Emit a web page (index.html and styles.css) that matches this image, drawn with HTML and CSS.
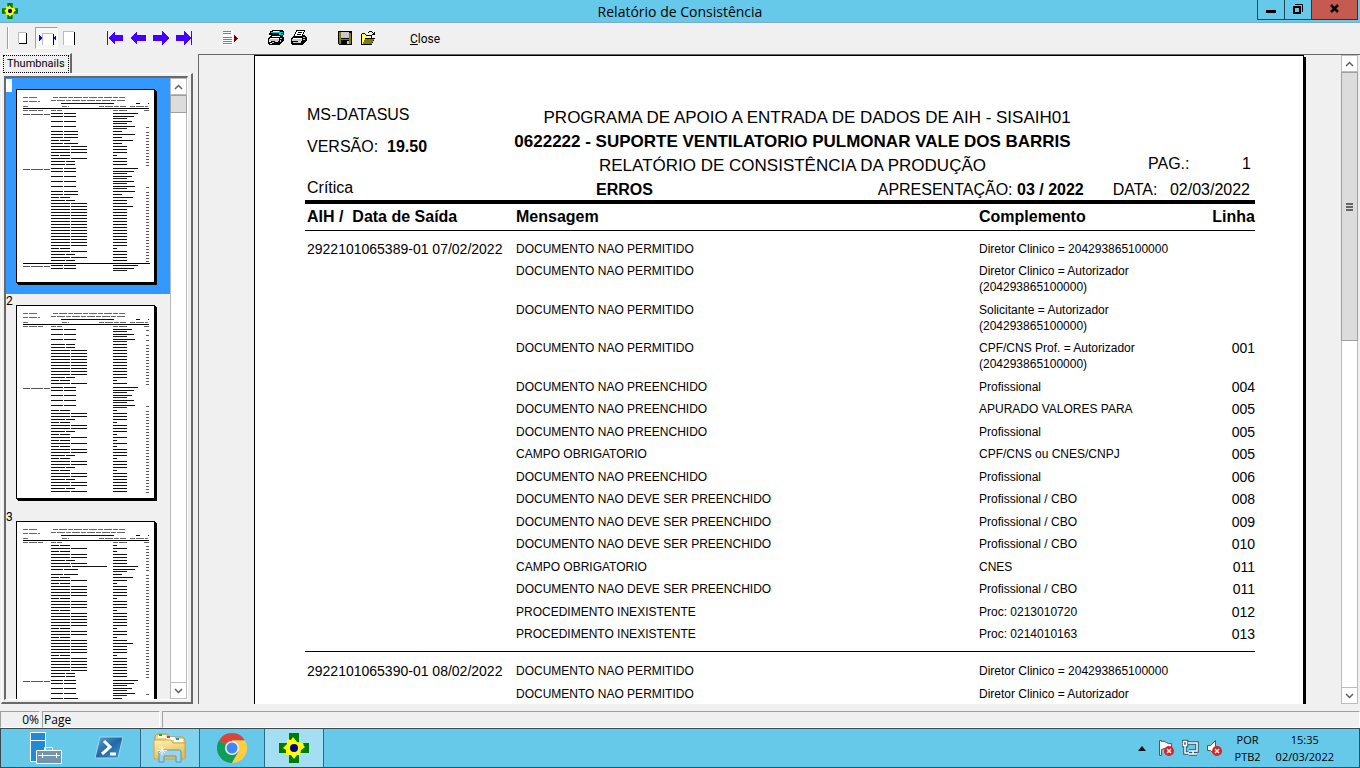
FILE: index.html
```html
<!DOCTYPE html>
<html lang="pt-BR">
<head>
<meta charset="utf-8">
<title>Relatório de Consistência</title>
<link rel="stylesheet" href="styles.css">
</head>
<body>
<svg class="defs" aria-hidden="true">
  <symbol id="sus" viewBox="0 0 30 30">
    <path fill="#007a00" d="M10 0h10v10h10v10H20v10H10V20H0V10h10z"/>
    <path fill="#ff0" d="M14 4l4 5 6 1 1 3 1 1-4 3-1 5-3 0-3 4-3-4-5 0 0-5-3-2 4-4 0-5 4 1z"/>
    <circle cx="15" cy="15" r="4" fill="#000080"/>
  </symbol>
  <symbol id="arrow" viewBox="0 0 16 16">
    <path fill="#40f" d="M0 8l7-7v4h9v6H7v4z"/>
  </symbol>
  <symbol id="first" viewBox="0 0 16 16">
    <path fill="#40f" d="M0 1h1v14H0zM1 8l7-7v4h8v6H8v4z"/>
  </symbol>
  <symbol id="up" viewBox="0 0 9 6"><path fill="none" stroke="#606060" stroke-width="1.500" d="M1 5l3.500-3.500L8 5"/></symbol>
  <symbol id="cross" viewBox="0 0 10 10"><circle cx="5" cy="5" r="5" fill="#e02020"/><path stroke="#fff" stroke-width="1.500" d="M3 3l4 4M7 3l-4 4"/></symbol>
</svg>

<header class="titlebar">
  <svg class="app-icon" width="16" height="16"><use href="#sus"/></svg>
  <h1 class="title">Relatório de Consistência</h1>
  <div class="window-buttons">
    <button class="wb" aria-label="Minimizar"><svg width="10" height="16"><path d="M0 10h10v3H0z"/></svg></button>
    <button class="wb wb-mid" aria-label="Restaurar"><svg width="10" height="16" fill="none" stroke="#000"><path d="M2 4.500h7.500V12"/><path stroke-width="2" d="M1 7h6v6H1z"/></svg></button>
    <button class="wb wb-close" aria-label="Fechar"><svg width="10" height="16"><path stroke="#000" stroke-width="2.500" d="M1 5l7 7M8 5l-7 7"/></svg></button>
  </div>
</header>

<nav class="toolbar" aria-label="Ferramentas">
  <span class="grip"></span>
  <div class="group">
    <button class="tool" aria-label="Página inteira"><svg width="16" height="16"><path fill="#fff" d="M4 2h7v11H4z"/><path fill="#bbb" d="M3 2h8v1H4v10H3z"/><path d="M11 3h1v11H4v-1h7z"/></svg></button>
    <button class="tool pressed" aria-label="Largura da página"><svg width="18" height="16"><path fill="#fff" d="M4 3h11v12H4z"/><path fill="#bbb" d="M4 3h11v1H5v11H4z"/><path d="M15 4h1v11h-1z"/><path fill="#00f" d="M1 5l3 3-3 3zM18 5l-3 3 3 3z"/></svg></button>
    <button class="tool" aria-label="100%"><svg width="16" height="16"><path fill="#fff" d="M3 1h10v14H3z"/><path fill="#bbb" d="M2 1h11v1H3v13H2z"/><path d="M13 2h1v13h-1z"/></svg></button>
  </div>
  <div class="group">
    <button class="tool" aria-label="Primeira"><svg width="16" height="16"><use href="#first"/></svg></button>
    <button class="tool" aria-label="Anterior"><svg width="16" height="16"><use href="#arrow"/></svg></button>
    <button class="tool flip" aria-label="Próxima"><svg width="16" height="16"><use href="#arrow"/></svg></button>
    <button class="tool flip" aria-label="Última"><svg width="16" height="16"><use href="#first"/></svg></button>
  </div>
  <div class="group">
    <button class="tool" aria-label="Ir para página"><svg width="16" height="16"><path fill="#fff" d="M1 1h10v14H1z"/><path fill="#808080" d="M1 1h8v1H1zM1 3h8v1H1zM1 7h9v1H1zM1 9h9v1H1zM1 11h9v1H1zM1 13h9v1H1z"/><path fill="#800000" d="M12 5l4 3.500-4 3.500z"/></svg></button>
  </div>
  <div class="group">
    <button class="tool" aria-label="Configurar impressora"><svg width="16" height="16"><path d="M4 0h11v1h1v4h-1v2h1v4h-1v1h-1v1h-1v1h-1v1H1v-1H0V8h1V7h1V6h1V5H1V3h1V1h2z"/><path fill="#fff" d="M5 1h6v1H5zM4 6h8v1H4zM2 8h9v1H2zM1 11h2v1H1zM2 13h2v1H2z"/><path fill="#0cc" d="M3 2h8V1h1v1h3v1h-2v1h2v1h-4V3H3z"/><path fill="#c8c8c8" d="M1 9h10v2H1zM12 8h2v1h-2zM12 10h1v2h-1zM4 12h2v1H4z"/><path fill="#ff0" d="M7 11h3v1H7z"/></svg></button>
    <button class="tool" aria-label="Imprimir"><svg width="16" height="16"><path d="M5 0h9v2h-1v2h-1v1h2v1h1v1h1v4h-1v1h-1v1h-1v1h-1v1H1v-1H0V8h1V7h1V6h1V4h1V2h1z"/><path fill="#fff" d="M6 1h7v1h-1v2h-1v2H4V4h1V2h1zM2 8h9v1H2z"/><path d="M7 2h4v1H7zM6 4h4v1H6z"/><path fill="#c8c8c8" d="M1 9h10v2H1zM12 7h2v1h-2zM12 9h2v1h-2zM2 12h8v1H2z"/><path fill="#ff0" d="M7 11h3v1H7z"/></svg></button>
  </div>
  <div class="group">
    <button class="tool" aria-label="Salvar"><svg width="16" height="16"><path d="M1 1h14v14H2l-1-1z"/><path fill="#808000" d="M2 2h2v7h8V3h2v11h-2v-4H4v4H2z"/><path fill="#c8c8c8" d="M4 2h8v6H4zM10 11h2v3h-2z"/></svg></button>
    <button class="tool" aria-label="Abrir"><svg width="16" height="16"><path d="M1 4h1V3h3v1h1v1h6v3h3v1h-1v2h-1v2h-1v2H1z"/><path fill="#ff6" d="M2 4h3v1h1v1h5v2H5v2H4v2H3v2H2z"/><path fill="#808000" d="M5 9h9v1h-1v2h-1v2H3v-2h1v-2h1z"/><path d="M8 2h1V1h3v1h1v1h1V2h1v3h-3V4h1V3h-1V2H9v1H8z"/></svg></button>
  </div>
  <button class="close"><u>C</u>lose</button>
</nav>

<main class="workspace">
  <aside class="sidebar">
    <button class="tab"><span>Thumbnails</span></button>
    <div class="tab-panel">
      <div class="list-frame">
        <div class="thumbs" id="thumbs"></div>
        <div class="scrollbar">
          <button class="sb-btn" aria-label="Acima"><svg width="9" height="6"><use href="#up"/></svg></button>
          <div class="sb-track"><div class="sb-thumb sb-thumb-small"></div></div>
          <button class="sb-btn flip-y" aria-label="Abaixo"><svg width="9" height="6"><use href="#up"/></svg></button>
        </div>
      </div>
    </div>
  </aside>

  <section class="viewer">
    <div class="canvas">
      <article class="page">
        <header class="report-head">
          <div class="head-left"><p>MS-DATASUS</p><p>VERSÃO: &nbsp;<b>19.50</b></p></div>
          <div class="head-mid">
            <p class="programa">PROGRAMA DE APOIO A ENTRADA DE DADOS DE AIH - SISAIH01</p>
            <p><b>0622222 - SUPORTE VENTILATORIO PULMONAR VALE DOS BARRIS</b></p>
            <p>RELATÓRIO DE CONSISTÊNCIA DA PRODUÇÃO</p>
          </div>
          <div class="head-right"><span>PAG.:</span><span>1</span></div>
        </header>
        <div class="report-sub">
          <span class="critica">Crítica</span><b class="erros">ERROS</b>
          <span>APRESENTAÇÃO: <b>03 / 2022</b></span>
          <span class="data">DATA: <span>02/03/2022</span></span>
        </div>
        <table class="report">
          <colgroup><col class="c-aih"><col class="c-msg"><col><col class="c-linha"></colgroup>
          <thead><tr><th>AIH /&nbsp; Data de Saída</th><th>Mensagem</th><th>Complemento</th><th class="num">Linha</th></tr></thead>
          <tbody>
            <tr><td class="aih">2922101065389-01 07/02/2022</td><td>DOCUMENTO NAO PERMITIDO</td><td>Diretor Clinico = 204293865100000</td><td></td></tr>
            <tr><td></td><td>DOCUMENTO NAO PERMITIDO</td><td>Diretor Clinico = Autorizador<br>(204293865100000)</td><td></td></tr>
            <tr><td></td><td>DOCUMENTO NAO PERMITIDO</td><td>Solicitante = Autorizador<br>(204293865100000)</td><td></td></tr>
            <tr><td></td><td>DOCUMENTO NAO PERMITIDO</td><td>CPF/CNS Prof. = Autorizador<br>(204293865100000)</td><td class="num">001</td></tr>
            <tr><td></td><td>DOCUMENTO NAO PREENCHIDO</td><td>Profissional</td><td class="num">004</td></tr>
            <tr><td></td><td>DOCUMENTO NAO PREENCHIDO</td><td>APURADO VALORES PARA</td><td class="num">005</td></tr>
            <tr><td></td><td>DOCUMENTO NAO PREENCHIDO</td><td>Profissional</td><td class="num">005</td></tr>
            <tr><td></td><td>CAMPO OBRIGATORIO</td><td>CPF/CNS ou CNES/CNPJ</td><td class="num">005</td></tr>
            <tr><td></td><td>DOCUMENTO NAO PREENCHIDO</td><td>Profissional</td><td class="num">006</td></tr>
            <tr><td></td><td>DOCUMENTO NAO DEVE SER PREENCHIDO</td><td>Profissional / CBO</td><td class="num">008</td></tr>
            <tr><td></td><td>DOCUMENTO NAO DEVE SER PREENCHIDO</td><td>Profissional / CBO</td><td class="num">009</td></tr>
            <tr><td></td><td>DOCUMENTO NAO DEVE SER PREENCHIDO</td><td>Profissional / CBO</td><td class="num">010</td></tr>
            <tr><td></td><td>CAMPO OBRIGATORIO</td><td>CNES</td><td class="num">011</td></tr>
            <tr><td></td><td>DOCUMENTO NAO DEVE SER PREENCHIDO</td><td>Profissional / CBO</td><td class="num">011</td></tr>
            <tr><td></td><td>PROCEDIMENTO INEXISTENTE</td><td>Proc: 0213010720</td><td class="num">012</td></tr>
            <tr><td></td><td>PROCEDIMENTO INEXISTENTE</td><td>Proc: 0214010163</td><td class="num">013</td></tr>
          </tbody>
          <tbody>
            <tr><td class="aih">2922101065390-01 08/02/2022</td><td>DOCUMENTO NAO PERMITIDO</td><td>Diretor Clinico = 204293865100000</td><td></td></tr>
            <tr><td></td><td>DOCUMENTO NAO PERMITIDO</td><td>Diretor Clinico = Autorizador</td><td></td></tr>
          </tbody>
        </table>
      </article>
    </div>
    <div class="scrollbar">
      <button class="sb-btn" aria-label="Acima"><svg width="9" height="6"><use href="#up"/></svg></button>
      <div class="sb-track"><div class="sb-thumb sb-thumb-large"><i></i></div></div>
      <button class="sb-btn flip-y" aria-label="Abaixo"><svg width="9" height="6"><use href="#up"/></svg></button>
    </div>
  </section>
</main>

<footer class="statusbar">
  <span class="st st-pct">0%</span><span class="st st-page">Page</span><span class="st st-rest"></span>
</footer>

<nav class="taskbar" aria-label="Barra de tarefas">
  <button class="task task-wide" aria-label="Gerenciador do Servidor"><svg width="34" height="34" fill="none"><path fill="#1e8ad8" stroke="#fff" d="M1.500 1.500h15v29h-15z"/><path stroke="#fff" d="M2 9.500h14"/><path fill="#7394aa" stroke="#fff" d="M7.500 19.500h25v13h-25z"/><path stroke="#fff" d="M15.500 19v-2.500h8V19M9 24.500h22M13.500 22v5M27.500 22v5"/></svg></button>
  <button class="task" aria-label="PowerShell"><svg width="32" height="28"><defs><linearGradient id="ps" x2="1" y2="1"><stop stop-color="#62a4d4"/><stop offset=".5" stop-color="#2368a5"/><stop offset="1" stop-color="#3c9bd2"/></linearGradient></defs><path fill="url(#ps)" stroke="#a4d4ee" stroke-linejoin="round" d="M7 3h23l-5 21H2z"/><path fill="none" stroke="#fff" stroke-width="3" d="M11 7l6 6-8 7M17 20h6"/></svg></button>
  <button class="task open" aria-label="Explorador de Arquivos"><svg width="34" height="32"><defs><linearGradient id="fo" y2="1" x2=".4"><stop stop-color="#fff3b0"/><stop offset="1" stop-color="#e5bd50"/></linearGradient></defs><path fill="#f1d578" stroke="#b89b49" d="M2 4l2-2h10l2 3h14l2 3v18H2z"/><path fill="#fff" d="M5 3h8v3H5zM13 5h9v3h-9zM21 7h9v3h-9z"/><path fill="#18b020" d="M6 2h3v2H6z"/><path fill="#d83a1e" d="M14 4h3v2h-3z"/><path fill="#2090e0" d="M23 6h3v2h-3z"/><path fill="url(#fo)" stroke="#c8a850" d="M1 8h17l2 3h12v16H1z"/><path fill="#9cd4ef" fill-opacity=".95" stroke="#4e9ac4" d="M6 30V20q0-2 2-2h18q2 0 2 2v10h-5v-6H11v6z"/><path stroke="#fff" stroke-opacity=".8" d="M9 14v9M4 18.500h10M6 15l6 6M12 15l-6 6"/></svg></button>
  <button class="task task-chrome" aria-label="Chrome"><svg width="30" height="30"><path fill="#db4437" d="M15 15L2 7.500A15 15 0 0 1 28 7.500H15z"/><path fill="#0f9d58" d="M2 7.500A15 15 0 0 0 15 30l6.500-11.500L15 15z"/><path fill="#ffcd40" d="M28 7.500A15 15 0 0 1 15 30l6.500-11.500L15 7.500z"/><circle cx="15" cy="15" r="7" fill="#f1f1f1"/><circle cx="15" cy="15" r="5.500" fill="#4285f4"/></svg></button>
  <button class="task active" aria-label="SISAIH01"><svg width="30" height="30"><use href="#sus"/></svg></button>
  <div class="tray">
    <button class="tray-btn" aria-label="Ícones ocultos"><svg width="8" height="5"><path fill="#111" d="M0 5l4-5 4 5z"/></svg></button>
    <button class="tray-btn" aria-label="Central de ações"><svg width="17" height="18"><path fill="#fff" stroke="#555" d="M1.500 1.500h2v1q3-1 5 1t5 1v7q-3 1-5-1t-5 0v6h-2z"/><use href="#cross" x="6" y="7" width="10" height="10"/></svg></button>
    <button class="tray-btn" aria-label="Rede"><svg width="17" height="18" fill="none"><path stroke="#31576c" stroke-width="3.500" d="M1.500 2.500h3v4h-3zM3 7v7h3M6 4h9v8H7M11 12v3M7 15h8"/><path stroke="#fff" stroke-width="1.500" d="M1.500 2.500h3v4h-3zM3 7v7h4M6 4h9v8H7M11 12v3M7 15h8"/></svg></button>
    <button class="tray-btn" aria-label="Volume"><svg width="17" height="18"><path fill="#fff" stroke="#555" d="M1.500 6.500h3l5-5v15l-5-5h-3z"/><use href="#cross" x="6" y="7" width="10" height="10"/></svg></button>
    <div class="lang"><span>POR</span><span>PTB2</span></div>
    <div class="clock"><span>15:35</span><span>02/03/2022</span></div>
  </div>
</nav>
<script src="thumbs.js"></script>
</body>
</html>
```
FILE: thumbs.js
```js
// Miniature pages. Each row is a message code plus a complement code;
// "|" starts a new AIH, "_" draws the closing rule before a new AIH.
const MSG = { D: [12, 12], P: [12, 14], C: [8, 10], N: [19, 16], X: [14, 9], L: [20, 35] };
const COMP = { a: [25], b: [21, 14], s: [19, 14], q: [22, 14], f: [9], v: [22], u: [20], g: [14], e: [4], r: [14] };
const PAGES = [
  '| Da Db Ds Dq Pf Pv Pf Cu Pf Ng Ng Ng Ce Ng Xr Xr | Da Db Ds Db Dq Pv Pf Cu Xr Ng Nu Ng Ng Ng Ng Ng Ng Ng Ng Ng Ng Ng Ng Ng Ce Ng Xr Ng Xr _ Da Db',
  'Ds Db Dq Xr Xr Ng Ng Ng Ng Ng Ng Ng Ng Ng Xr Ce Ng | Da Db Ds Db Dq Ce Ng Ng Xr Ce Ng Ng Xr Ce Ng Ce Ng Ce Ng Ng Xr Ce Ng Ng Xr Ce Ng Ng Xr Ng Ng Xr Ng',
  'Ce Ng Ce Ng Ng Xr Ng La Pq Pf Cu Ng Ce Ng Ng Ng Ng Ce Ng Ng Ng Ce Ng Ng Ng Ng Ng Ce Ng Ng Ce Ng Nu Ng Ng Ng Ce Ng Ng Ng Ng Ng Xr Xr | Da Db Ds Dq Pf'
];

function bar(x, y, w, cls) {
  return `<path class="${cls}" d="M${x} ${y + 0.5}h${w}"/>`;
}

function drawPage(code) {
  let out = bar(6, 7, 14, 'faint') + bar(36, 7, 72, 'faint') +
    bar(6, 11, 17, 'faint') + bar(34, 10, 75, 'faint') +
    bar(44, 13, 53, 'ink') + bar(119, 13, 4, 'ink') + bar(131, 13, 1, 'ink') +
    bar(6, 16, 6, 'faint') + bar(45, 16, 7, 'faint') + bar(82, 16, 27, 'faint') + bar(113, 16, 18, 'faint') +
    bar(6, 18, 126, 'rule') +
    bar(6, 20, 21, 'faint') + bar(34, 20, 11, 'faint') + bar(96, 20, 14, 'faint') + bar(127, 20, 6, 'faint');
  let y = 23;
  let line = !code.startsWith('|');
  for (const t of code.split(' ')) {
    if (t === '|' || t === '_') {
      if (y > 23) y += 1;
      if (t === '_') { out += bar(6, y - 1, 127, 'rule'); y += 1; }
      out += bar(6, y + 1, 27, 'mid');
      line = false;
      continue;
    }
    const m = MSG[t[0]];
    const c = COMP[t[1]];
    out += bar(34, y, m[0], 'ink') + bar(35 + m[0], y, m[1], 'ink') + bar(96, y, c[0], 'ink');
    if (c[1]) out += bar(96, y + 2, c[1], 'solid');
    if (t === 'Dq') line = true;
    if (line) out += bar(129, y + 1, 3, 'num-mark');
    y += c[1] ? 5 : 3;
  }
  return out;
}

document.getElementById('thumbs').innerHTML = PAGES.map((code, i) =>
  `<button class="thumb${i ? '' : ' selected'}"><span class="thumb-no">${i + 1}</span>` +
  `<svg class="thumb-page" viewBox="0 0 137 192" aria-hidden="true">${drawPage(code)}</svg></button>`
).join('');
```
FILE: styles.css
```css
* { box-sizing: border-box; }
html, body { height: 100%; margin: 0; }
body {
  display: flex;
  flex-direction: column;
  overflow: hidden;
  background: #f0f0f0;
  color: #000;
  font-family: "Liberation Sans", Arial, sans-serif;
  font-size: 12px;
}
button { margin: 0; padding: 0; border: 0; background: none; font: inherit; color: inherit; }
p { margin: 0; }
svg { display: block; flex: none; }
.defs { position: absolute; width: 0; height: 0; }

/* Title bar */
.titlebar {
  display: grid;
  grid-template-columns: 1fr auto 1fr;
  align-items: start;
  height: 23px;
  flex: none;
  background: #66c9ea;
  border-bottom: 1px solid #7fa9c4;
}
.app-icon { margin: 3px 2px; }
.title { margin: 0; font: 14px/23px "Open Sans", "Noto Sans", sans-serif; }
.window-buttons { display: flex; justify-self: end; margin-right: 2px; }
.wb {
  display: flex;
  justify-content: center;
  width: 28px;
  height: 20px;
  border: 1px solid #1e4656;
  border-top: 0;
}
.wb-mid { width: 26px; border-width: 0 0 1px; }
.wb-close { width: 47px; background: #c55a50; border-color: #5a2420; }

/* Toolbar */
.toolbar { display: flex; align-items: center; gap: 23px; height: 30px; flex: none; }
.grip { width: 2px; height: 22px; margin: 0 -20px 0 7px; border-left: 1px solid #a0a0a0; border-right: 1px solid #fff; }
.group { display: flex; }
.tool { display: flex; align-items: center; justify-content: center; width: 23px; height: 22px; padding-right: 1px; }
.tool svg { shape-rendering: crispEdges; }
.pressed { padding: 0; background: #f8f8f8; border: 1px solid #fff; border-top-color: #a0a0a0; border-left-color: #a0a0a0; }
.flip { padding: 0 1px 0 0; }
.flip svg { transform: scaleX(-1); }
.flip-y svg { transform: scaleY(-1); }
.close { padding: 0 7px; height: 22px; font: 12px/24px Roboto, "Noto Sans", sans-serif; }

/* Workspace */
.workspace { display: flex; flex: 1; min-height: 0; gap: 5px; }
.sidebar { display: flex; flex-direction: column; width: 193px; flex: none; padding-left: 1px; }
.tab {
  align-self: flex-start;
  height: 20px;
  padding: 1px 1px 0 1px;
  border: 1px solid #fff;
  border-right: 2px solid #696969;
  border-bottom: 0;
}
.tab span { display: block; padding: 0 3px; border: 1px dotted #000; font: 11px/16px Roboto, "Noto Sans", sans-serif; }
.tab-panel {
  flex: 1;
  min-height: 0;
  padding: 2px 3px 2px 2px;
  border: 1px solid #fff;
  border-right: 2px solid #696969;
  border-bottom: 2px solid #696969;
}
.list-frame {
  display: flex;
  height: 100%;
  border: 1px solid #fff;
  border-top: 2px solid #696969;
  border-left: 2px solid #696969;
}
.thumbs { flex: 1; min-width: 0; overflow: hidden; }
.thumb { display: flex; width: 100%; height: 216px; align-items: flex-start; }
.selected { background: #3399ff; }
.thumb-no { width: 6px; margin-top: 1px; font: 12px/13px Roboto, "Noto Sans", sans-serif; }
.selected .thumb-no { color: #f0f0f0; background: #fff; }
.thumb-page {
  width: 139px;
  height: 194px;
  margin: 11px 0 0 4px;
  background: #fff;
  border: 1px solid #000;
  box-shadow: 1px 1px #000, 2px 2px #000;
  shape-rendering: crispEdges;
}
.thumb-page path { stroke: #000; }
.thumb-page .ink { stroke: #101010; }
.thumb-page .solid { stroke: #222; }
.thumb-page .mid { stroke: #555; stroke-dasharray: 7 1 12 1; }
.thumb-page .num-mark { stroke: #645058; }
.thumb-page .faint { stroke: #666; stroke-dasharray: 5 1 8 1; }

/* Scroll bars */
.scrollbar { display: flex; flex-direction: column; width: 17px; flex: none; background: #fff; border-left: 1px solid #bbb; border-right: 1px solid #bbb; }
.sb-btn { display: flex; align-items: center; justify-content: center; height: 17px; flex: none; border: 1px solid #bbb; border-width: 1px 0; }
.sb-track { flex: 1; }
.sb-thumb { margin: 0 -1px; background: #dcdcdc; border: 1px solid #a0a0a0; }
.sb-thumb-small { height: 3%; }
.sb-thumb-large { display: flex; align-items: center; justify-content: center; height: 269px; }
.sb-thumb-large i { width: 7px; height: 8px; background: repeating-linear-gradient(#666 0 2px, transparent 2px 3px); }

/* Report viewer */
.viewer {
  display: flex;
  flex: 1;
  min-width: 0;
  margin-top: 1px;
  padding-right: 2px;
  border-top: 1px solid #696969;
  border-left: 1px solid #696969;
}
.canvas { flex: 1; min-width: 0; overflow: hidden; padding: 0 37px 0 55px; }
.page {
  min-height: 700px;
  padding: 50px 48px 0 50px;
  background: #fff;
  border: 1px solid #000;
  box-shadow: 1px 2px #000, 2px 2px #000;
}
.report-head { display: flex; justify-content: space-between; padding: 0 4px 0 2px; font-size: 16px; line-height: 24px; }
.head-left { display: flex; flex-direction: column; width: 130px; gap: 8px; margin-top: -3px; white-space: nowrap; }
.head-mid { font-size: 17px; text-align: center; }
.head-mid .programa { text-align: right; }
.head-right { display: flex; align-self: flex-end; justify-content: space-between; width: 103px; padding-bottom: 2px; }
.report-sub { display: flex; align-items: flex-start; height: 22px; padding: 0 5px 0 2px; font-size: 16px; line-height: 24px; }
.critica { width: 289px; margin-top: -2px; }
.erros { flex: 1; }
.data { margin-left: 29px; }
.data span { margin-left: 8px; }
.report { width: 100%; table-layout: fixed; border-collapse: collapse; border-top: 4px solid #000; font-size: 12px; line-height: 16px; }
.c-aih { width: 209px; }
.c-msg { width: 463px; }
.c-linha { width: 60px; }
.report th { height: 28px; padding: 0 2px; border-bottom: 1px solid #000; font-size: 16px; text-align: left; }
.report td { padding: 3px 2px; vertical-align: top; }
.report tr:nth-child(even) td { padding-bottom: 4px; }
.report tbody tr:first-child td { padding-top: 10px; }
.report tr:nth-child(16) td { padding-bottom: 9px; }
.report tbody + tbody { border-top: 1px solid #000; }
.report tbody + tbody tr:first-child td { padding-top: 11px; padding-bottom: 4px; }
.report .aih, .report td.num { font-size: 14px; white-space: nowrap; }
.report .num { padding-right: 0; text-align: right; }

/* Status bar */
.statusbar { display: flex; gap: 2px; height: 24px; flex: none; padding-top: 7px; font: 12px/16px "Open Sans", "Noto Sans", sans-serif; }
.st { height: 17px; border: 1px solid #fff; border-top-color: #a0a0a0; border-left-color: #a0a0a0; }
.st-pct { width: 40px; text-align: right; }
.st-page { width: 118px; padding-left: 1px; }
.st-rest { flex: 1; }

/* Task bar */
.taskbar {
  display: flex;
  height: 40px;
  flex: none;
  background: #66c9ea;
  border: 1px solid #3b4a50;
  font: 11px/17px "Open Sans", "Noto Sans", sans-serif;
}
.task { display: flex; align-items: center; justify-content: center; width: 62px; border: 0 solid #2f6a82; }
.task-wide { width: 77px; padding-left: 12px; }
.open { width: 60px; background: #80d2ee; border-width: 0 1px; }
.task-chrome { width: 64px; }
.active { width: 60px; background: #a4def3; border-width: 0 1px; }
.tray { display: flex; align-items: center; gap: 7px; margin-left: auto; padding-right: 25px; }
.tray-btn:first-child { margin-right: 5px; }
.lang, .clock { display: flex; flex-direction: column; text-align: center; }
.lang { margin-left: 5px; }
.clock { margin-left: 8px; }
```
